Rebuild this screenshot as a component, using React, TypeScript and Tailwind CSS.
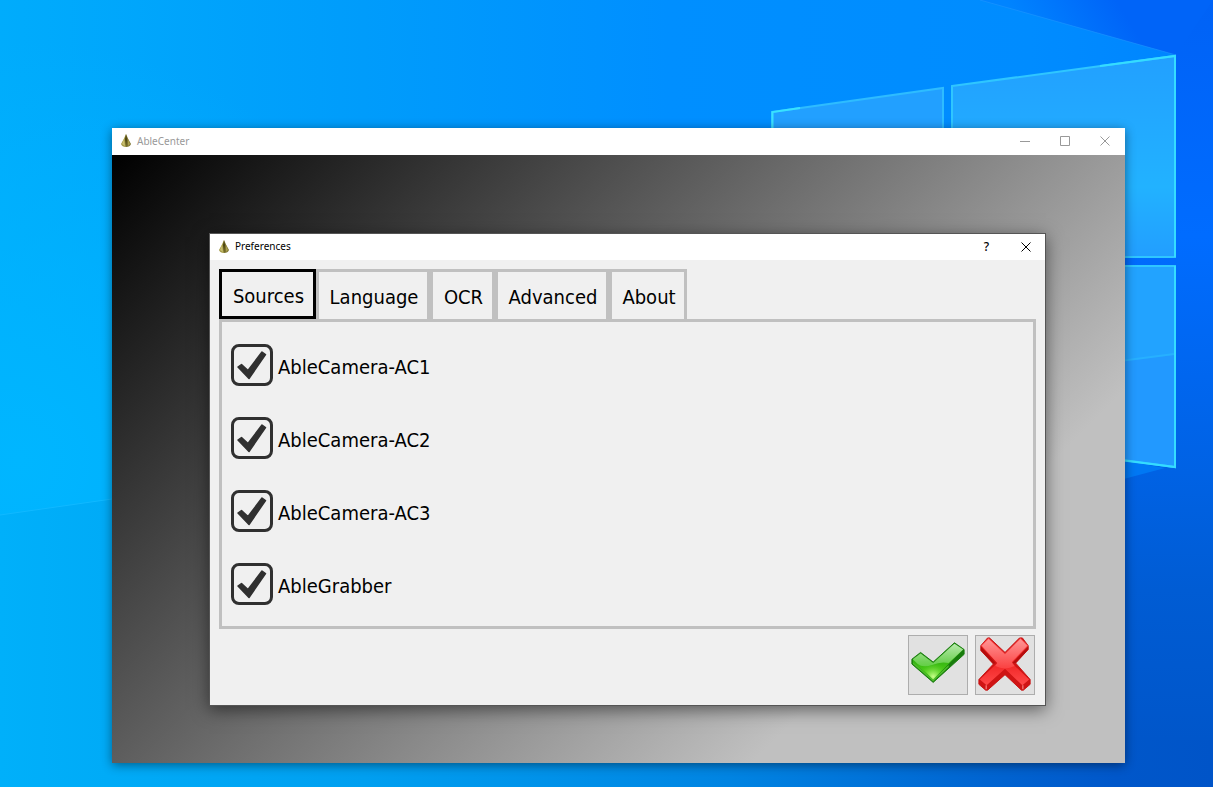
import React, { useState } from 'react';
import { clsx } from 'clsx';

const tabs = [
  { id: 'sources', label: 'Sources', width: 'w-[97px]' },
  { id: 'language', label: 'Language', width: 'w-[114px]' },
  { id: 'ocr', label: 'OCR', width: 'w-[65px]' },
  { id: 'advanced', label: 'Advanced', width: 'w-[114px]' },
  { id: 'about', label: 'About', width: 'w-[78px]' },
];

const initialSources = [
  { name: 'AbleCamera-AC1', enabled: true },
  { name: 'AbleCamera-AC2', enabled: true },
  { name: 'AbleCamera-AC3', enabled: true },
  { name: 'AbleGrabber', enabled: true },
];

function Wallpaper() {
  return (
    <svg
      className="absolute inset-0 h-full w-full"
      viewBox="0 0 1213 787"
      preserveAspectRatio="none"
      aria-hidden="true"
    >
      <defs>
        <linearGradient id="sky" x1="0" y1="0" x2="1" y2="0">
          <stop offset="0" stopColor="#00acfc" />
          <stop offset="0.3" stopColor="#009cfb" />
          <stop offset="0.55" stopColor="#008fff" />
          <stop offset="0.85" stopColor="#008cff" />
          <stop offset="1" stopColor="#0084ff" />
        </linearGradient>
        <radialGradient id="glow" gradientUnits="userSpaceOnUse" cx="20" cy="460" r="420">
          <stop offset="0" stopColor="#00b6ff" />
          <stop offset="1" stopColor="#00b6ff" stopOpacity="0" />
        </radialGradient>
        <linearGradient id="corner" gradientUnits="userSpaceOnUse" x1="1030" y1="40" x2="1110" y2="-10">
          <stop offset="0" stopColor="#0084ff" />
          <stop offset="1" stopColor="#0064f8" />
        </linearGradient>
        <linearGradient id="side" gradientUnits="userSpaceOnUse" x1="0" y1="0" x2="0" y2="787">
          <stop offset="0" stopColor="#0062f6" />
          <stop offset="0.3" stopColor="#006cff" />
          <stop offset="0.6" stopColor="#0062e4" />
          <stop offset="0.75" stopColor="#005cd4" />
          <stop offset="0.94" stopColor="#0056ca" />
          <stop offset="1" stopColor="#0056ca" />
        </linearGradient>
        <linearGradient id="floor" x1="0" y1="0" x2="1" y2="0">
          <stop offset="0" stopColor="#00b0fa" />
          <stop offset="0.3" stopColor="#009ff0" />
          <stop offset="0.6" stopColor="#0084e2" />
          <stop offset="0.8" stopColor="#0066d2" />
          <stop offset="0.92" stopColor="#0057ca" />
          <stop offset="1" stopColor="#0054c8" />
        </linearGradient>
        <linearGradient id="pane" x1="0" y1="0" x2="0" y2="1">
          <stop offset="0" stopColor="#22a0ff" />
          <stop offset="0.65" stopColor="#22b2ff" />
          <stop offset="1" stopColor="#229eff" />
        </linearGradient>
      </defs>
      <rect width="1213" height="787" fill="url(#sky)" />
      <rect width="600" height="787" fill="url(#glow)" />
      <path d="M980 0H1213V60L1176 55Z" fill="url(#corner)" />
      <path d="M1176 54L1213 0V787H1100V120Z" fill="url(#side)" />
      <path d="M0 515L112 499V740H1213V787H0Z" fill="url(#floor)" />
      <path d="M980 0L1176 55" stroke="#1f96ff" strokeWidth="1" opacity="0.6" />
      <path d="M0 515L112 499" stroke="#10b8ff" strokeWidth="1" />
      <path d="M1120 460L1165 468L1120 480Z" fill="#0078f4" />

      <path d="M772 112L943 88V256H772Z" fill="#22a0ff" stroke="#2ebcff" strokeWidth="2" />
      <path d="M772.5 140V112L800 108" fill="none" stroke="#38e2ff" strokeWidth="2" />
      <path d="M952 86L1175 56V257H952Z" fill="url(#pane)" stroke="#2fc6ff" strokeWidth="2" />
      <path d="M952 266H1175V467L952 437Z" fill="#2299ff" stroke="#2fc6ff" strokeWidth="2" />
      <path d="M952 267H1174V355L952 381Z" fill="#22a3ff" />
      <path d="M1120 361L1174 354" stroke="#27b0ff" strokeWidth="2" />
      <path d="M1100 66L1175 56V257M1175 266V467L1120 460" fill="none" stroke="#35dcff" strokeWidth="2" />
    </svg>
  );
}

function AppIcon() {
  return (
    <svg width="12" height="14" viewBox="0 0 12 14" aria-hidden="true">
      <path d="M6 0Q4 5 1 10Q2 13 6 13Z" fill="#a39a45" />
      <path d="M6 0Q8 5 11 10Q10 13 6 13Z" fill="#7d7430" />
      <path d="M4 5L2 10L5 12Z" fill="#c9bf72" />
      <path d="M8 5L10 10L8 12Z" fill="#aaa050" />
      <path d="M6 0L5 5L6 13L7 5Z" fill="#4b4512" />
    </svg>
  );
}

function CloseIcon() {
  return (
    <svg width="10" height="10" viewBox="0 0 10 10" aria-hidden="true">
      <path d="M0.5 0.5L9.5 9.5M9.5 0.5L0.5 9.5" stroke="currentColor" strokeWidth="1" />
    </svg>
  );
}

function AcceptIcon() {
  return (
    <svg width="60" height="60" viewBox="0 0 60 60" aria-hidden="true">
      <defs>
        <linearGradient id="green" x1="0" y1="0" x2="0" y2="1">
          <stop offset="0" stopColor="#55c83c" />
          <stop offset="0.5" stopColor="#35b512" />
          <stop offset="1" stopColor="#5fe01c" />
        </linearGradient>
        <linearGradient id="greenShine" x1="0" y1="0" x2="0" y2="1">
          <stop offset="0" stopColor="#d9f5d2" />
          <stop offset="1" stopColor="#6fd455" />
        </linearGradient>
        <radialGradient id="greenGlow" gradientUnits="userSpaceOnUse" cx="25" cy="42" r="15">
          <stop offset="0" stopColor="#c8ff8c" />
          <stop offset="1" stopColor="#4cc81a" stopOpacity="0" />
        </radialGradient>
      </defs>
      <path d="M3 24L12 17L25 27L47 7L57 14V19L25 48L3 29Z" fill="#187c0c" stroke="#187c0c" strokeLinejoin="round" />
      <path d="M4 24L12 18L25 28L47 8L56 14L25 45L4 27Z" fill="url(#green)" />
      <path d="M4 24L12 18L25 28L47 8L56 14L41 28Q33 26 24 30Q14 33 9 29Z" fill="url(#greenShine)" opacity="0.75" />
      <path d="M4 27L25 45L41 30V32L25 47L4 29Z" fill="#4fc02a" />
      <path d="M9 29Q16 33 25 30Q33 27 41 28L25 45Z" fill="url(#greenGlow)" />
    </svg>
  );
}

function CancelIcon() {
  return (
    <svg width="60" height="60" viewBox="0 0 60 60" aria-hidden="true">
      <defs>
        <linearGradient id="red" x1="0" y1="0" x2="0" y2="1">
          <stop offset="0" stopColor="#ff5050" />
          <stop offset="0.6" stopColor="#f22a2a" />
          <stop offset="1" stopColor="#ff4a4a" />
        </linearGradient>
        <linearGradient id="redShine" x1="0" y1="0" x2="0" y2="1">
          <stop offset="0" stopColor="#ffb4b4" />
          <stop offset="1" stopColor="#ff4c4c" />
        </linearGradient>
      </defs>
      <path
        d="M12 2H14L30 17L45 2H48L54 10V14L41 28L56 45V50L49 56H47L30 40L12 56H10L3 50V45L18 29L5 15V10Z"
        fill="#cf1414"
        stroke="#c81414"
        strokeLinejoin="round"
      />
      <path d="M13 2L30 18L46 2L54 10L37 28L55 45L48 51L30 34L11 51L4 45L22 28L5 10Z" fill="url(#red)" />
      <path d="M13 3L30 19L46 3L53 10L37 27L40 31Q30 36 20 31L22 28L6 10Z" fill="url(#redShine)" opacity="0.7" />
      <path d="M48 51H49V55H48ZM10 51H11V55H10Z" fill="#ff9a9a" />
      <path d="M5 11L20 28L18 29L5 15ZM54 11L38 28L41 28L54 14Z" fill="#a80a0a" opacity="0.7" />
    </svg>
  );
}

interface SourceCheckboxProps {
  name: string;
  checked: boolean;
  onChange: () => void;
}

function SourceCheckbox({ name, checked, onChange }: SourceCheckboxProps) {
  return (
    <label className="flex items-center gap-[5px] self-start">
      <span className="relative flex">
        <input
          type="checkbox"
          checked={checked}
          onChange={onChange}
          className="size-[42px] appearance-none rounded-lg border-3 border-[#303030]"
        />
        {checked && (
          <svg className="pointer-events-none absolute inset-0" width="42" height="42" viewBox="0 0 42 42" aria-hidden="true">
            <path d="M7 23L10.5 20.5L17 26.5L31 8L34.5 10.5L18 34.5Z" fill="#303030" stroke="#303030" strokeWidth="1.5" strokeLinejoin="round" />
          </svg>
        )}
      </span>
      <span className="pt-[3px]">{name}</span>
    </label>
  );
}

export default function App() {
  const [activeTab, setActiveTab] = useState('sources');
  const [sources, setSources] = useState(initialSources);

  const toggleSource = (name: string) => {
    setSources(sources.map(s => (s.name === name ? { ...s, enabled: !s.enabled } : s)));
  };

  return (
    <div className="relative flex min-h-screen overflow-hidden pt-32 pr-22 pb-6 pl-28 font-['Noto_Sans','Open_Sans',sans-serif]">
      <Wallpaper />

      {/* Main window */}
      <main className="relative flex flex-1 flex-col shadow-[0_2px_10px_rgba(0,0,0,0.45)]">
        <header className="flex h-[27px] items-center bg-white pr-[15px] pb-px pl-2 text-[#999999]">
          <AppIcon />
          <h1 className="ml-[5px] flex-1 text-[10px]">AbleCenter</h1>
          <div className="flex items-center gap-[30px]">
            <button type="button" aria-label="Minimize">
              <svg width="10" height="10" viewBox="0 0 10 10" aria-hidden="true">
                <path d="M0 5.5H10" stroke="currentColor" />
              </svg>
            </button>
            <button type="button" aria-label="Maximize">
              <svg width="10" height="10" viewBox="0 0 10 10" aria-hidden="true">
                <path d="M0.5 0.5H9.5V9.5H0.5Z" fill="none" stroke="currentColor" />
              </svg>
            </button>
            <button type="button" aria-label="Close">
              <CloseIcon />
            </button>
          </div>
        </header>

        <div className="flex flex-1 bg-[linear-gradient(135deg,#000000_0%,#c0c0c0_77%)] pt-[78px] pr-[79px] pb-[57px] pl-[97px]">
          {/* Preferences dialog */}
          <section
            role="dialog"
            aria-labelledby="preferences-title"
            className="flex flex-1 flex-col border border-[#555555] bg-[#f0f0f0] shadow-[0_4px_16px_rgba(0,0,0,0.5)]"
          >
            <header className="flex h-[26px] items-center bg-white pr-[14px] pb-px pl-2 text-black">
              <AppIcon />
              <h2 id="preferences-title" className="ml-[5px] flex-1 text-[10px]">Preferences</h2>
              <div className="flex items-center gap-[32px]">
                <button type="button" aria-label="Help" className="text-[12px] font-medium">?</button>
                <button type="button" aria-label="Close">
                  <CloseIcon />
                </button>
              </div>
            </header>

            <div className="flex flex-1 flex-col px-[9px] pt-[9px] pb-[10px] font-['DejaVu_Sans_Condensed','Noto_Sans',sans-serif] text-[20px] leading-7 text-black">
              <div role="tablist" className="flex h-[50px]">
                {tabs.map(tab => (
                  <button
                    key={tab.id}
                    type="button"
                    role="tab"
                    aria-selected={activeTab === tab.id}
                    onClick={() => setActiveTab(tab.id)}
                    className={clsx(
                      'border-3 pt-[3px] pl-0.5',
                      tab.width,
                      activeTab === tab.id ? 'border-black' : 'border-[#c0c0c0] border-b-0'
                    )}
                  >
                    {tab.label}
                  </button>
                ))}
              </div>

              <div role="tabpanel" className="flex flex-1 flex-col justify-between border-3 border-[#c0c0c0] px-[9px] pt-[22px] pb-[21px]">
                {activeTab === 'sources' && sources.map(source => (
                  <SourceCheckbox
                    key={source.name}
                    name={source.name}
                    checked={source.enabled}
                    onChange={() => toggleSource(source.name)}
                  />
                ))}
              </div>

              <div className="mt-[6px] flex justify-end gap-[7px] pr-px">
                <button type="button" aria-label="OK" className="flex size-[60px] items-center justify-center border border-[#adadad] bg-[#e1e1e1]">
                  <AcceptIcon />
                </button>
                <button type="button" aria-label="Cancel" className="flex size-[60px] items-center justify-center border border-[#adadad] bg-[#e1e1e1]">
                  <CancelIcon />
                </button>
              </div>
            </div>
          </section>
        </div>
      </main>
    </div>
  );
}
